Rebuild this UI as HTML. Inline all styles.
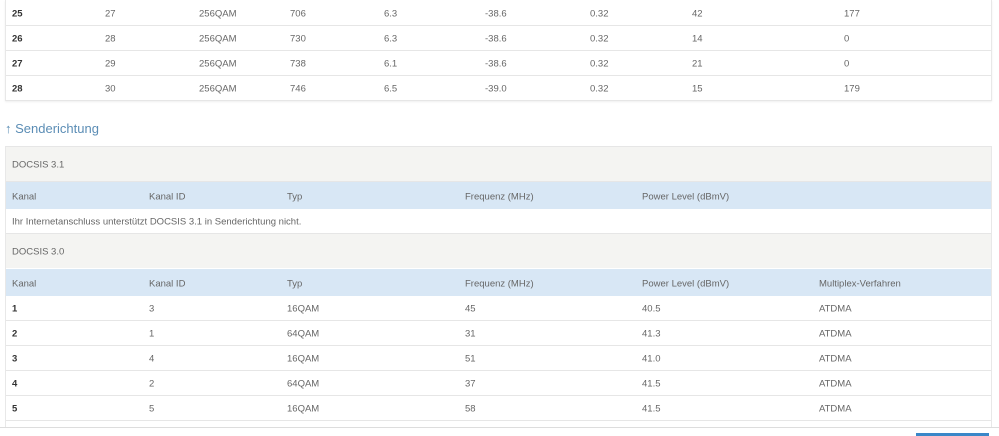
<!DOCTYPE html>
<html><head><style>
body{margin:0;width:999px;height:436px;overflow:hidden;background:#fff;font-family:"Liberation Sans",sans-serif;font-size:9.5px;color:#666;position:relative}
.p{position:absolute;left:5px;width:985px;border-left:1px solid #e8e8e8;border-right:1px solid #e8e8e8}
.r{position:absolute;left:0;right:0;border-bottom:1px solid #e6e6e6}
.r span{position:absolute;top:50%;transform:translateY(-42%);white-space:nowrap}
.b{font-weight:bold;color:#333}
.g{background:#f4f4f2}
.h{background:#d8e7f5}
</style></head><body>
<div class="p" style="top:0;height:100px;border-bottom:1px solid #e6e6e6;box-shadow:0 1px 2px #eee">
<div class="r" style="top:0;height:25px"><span class="b" style="left:6px">25</span><span style="left:99px">27</span><span style="left:193px">256QAM</span><span style="left:284px">706</span><span style="left:378px">6.3</span><span style="left:479px">-38.6</span><span style="left:584px">0.32</span><span style="left:686px">42</span><span style="left:838px">177</span></div>
<div class="r" style="top:25px;height:25px"><span class="b" style="left:6px">26</span><span style="left:99px">28</span><span style="left:193px">256QAM</span><span style="left:284px">730</span><span style="left:378px">6.3</span><span style="left:479px">-38.6</span><span style="left:584px">0.32</span><span style="left:686px">14</span><span style="left:838px">0</span></div>
<div class="r" style="top:50px;height:25px"><span class="b" style="left:6px">27</span><span style="left:99px">29</span><span style="left:193px">256QAM</span><span style="left:284px">738</span><span style="left:378px">6.1</span><span style="left:479px">-38.6</span><span style="left:584px">0.32</span><span style="left:686px">21</span><span style="left:838px">0</span></div>
<div class="r" style="top:75px;height:25px;border:none"><span class="b" style="left:6px">28</span><span style="left:99px">30</span><span style="left:193px">256QAM</span><span style="left:284px">746</span><span style="left:378px">6.5</span><span style="left:479px">-39.0</span><span style="left:584px">0.32</span><span style="left:686px">15</span><span style="left:838px">179</span></div>
</div>
<div style="position:absolute;left:5px;top:121px;font-size:13px;color:#5b8db5">↑ Senderichtung</div>
<div class="p" style="top:146px;height:281px;border-top:1px solid #e6e6e6">
<div class="r g" style="top:0;height:34px"><span style="left:6px">DOCSIS 3.1</span></div>
<div class="r h" style="top:35px;height:27px;border:none"><span style="left:6px">Kanal</span><span style="left:143px">Kanal ID</span><span style="left:281px">Typ</span><span style="left:459px">Frequenz (MHz)</span><span style="left:636px">Power Level (dBmV)</span></div>
<div class="r" style="top:62px;height:24px"><span style="left:6px">Ihr Internetanschluss unterstützt DOCSIS 3.1 in Senderichtung nicht.</span></div>
<div class="r g" style="top:87px;height:34px;border:none"><span style="left:6px">DOCSIS 3.0</span></div>
<div class="r h" style="top:122px;height:27px;border:none"><span style="left:6px">Kanal</span><span style="left:143px">Kanal ID</span><span style="left:281px">Typ</span><span style="left:459px">Frequenz (MHz)</span><span style="left:636px">Power Level (dBmV)</span><span style="left:813px">Multiplex-Verfahren</span></div>
<div class="r" style="top:149px;height:24px"><span class="b" style="left:6px">1</span><span style="left:143px">3</span><span style="left:281px">16QAM</span><span style="left:459px">45</span><span style="left:636px">40.5</span><span style="left:813px">ATDMA</span></div>
<div class="r" style="top:174px;height:24px"><span class="b" style="left:6px">2</span><span style="left:143px">1</span><span style="left:281px">64QAM</span><span style="left:459px">31</span><span style="left:636px">41.3</span><span style="left:813px">ATDMA</span></div>
<div class="r" style="top:199px;height:24px"><span class="b" style="left:6px">3</span><span style="left:143px">4</span><span style="left:281px">16QAM</span><span style="left:459px">51</span><span style="left:636px">41.0</span><span style="left:813px">ATDMA</span></div>
<div class="r" style="top:224px;height:24px"><span class="b" style="left:6px">4</span><span style="left:143px">2</span><span style="left:281px">64QAM</span><span style="left:459px">37</span><span style="left:636px">41.5</span><span style="left:813px">ATDMA</span></div>
<div class="r" style="top:249px;height:24px"><span class="b" style="left:6px">5</span><span style="left:143px">5</span><span style="left:281px">16QAM</span><span style="left:459px">58</span><span style="left:636px">41.5</span><span style="left:813px">ATDMA</span></div>
</div>
<div style="position:absolute;left:0;right:0;top:427px;border-top:1px solid #ddd"></div>
<div style="position:absolute;left:916px;top:433px;width:73px;height:3px;background:#3a87c8"></div>
</body></html>
